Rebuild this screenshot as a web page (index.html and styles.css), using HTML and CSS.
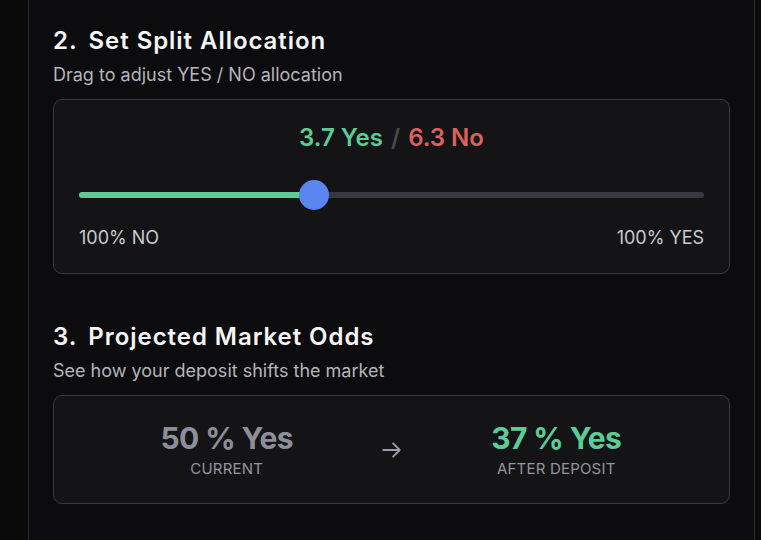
FILE: index.html
```html
<!DOCTYPE html>
<html lang="en">
<head>
  <meta charset="UTF-8" />
  <meta name="viewport" content="width=device-width, initial-scale=1.0"/>
  <title>Split Deposit</title>
  <link rel="stylesheet" href="styles.css">
</head>
<body>
  <div class="panel">
    <section class="step">
      <h2><span class="step-num">2.</span>Set Split Allocation</h2>
      <p class="step-hint">Drag to adjust YES / NO allocation</p>

      <div class="card split-card">
        <div class="split-values">
          <span class="yes">3.7 Yes</span>
          <span class="sep">/</span>
          <span class="no">6.3 No</span>
        </div>

        <div class="slider">
          <div class="slider-fill" style="width: 37.6%"></div>
          <div class="slider-thumb" style="left: 37.6%"></div>
        </div>

        <div class="slider-labels">
          <span>100% NO</span>
          <span>100% YES</span>
        </div>
      </div>
    </section>

    <section class="step">
      <h2><span class="step-num">3.</span>Projected Market Odds</h2>
      <p class="step-hint">See how your deposit shifts the market</p>

      <div class="card odds-card">
        <div class="odds">
          <div class="odds-value current">50 % Yes</div>
          <div class="odds-label">CURRENT</div>
        </div>
        <svg class="odds-arrow" width="22" height="22" viewBox="0 0 20 20" fill="none" stroke="currentColor" stroke-width="1.7" stroke-linecap="round" stroke-linejoin="round">
          <path d="M2 10h15M11 4l6 6-6 6"/>
        </svg>
        <div class="odds">
          <div class="odds-value after">37 % Yes</div>
          <div class="odds-label">AFTER DEPOSIT</div>
        </div>
      </div>
    </section>
  </div>
</body>
</html>
```

FILE: styles.css
```css
body {
  margin: 0;
  background: #0a0a0b;
  font-family: Inter, 'Noto Sans', sans-serif;
  color: #f2f2f4;
}

.panel {
  margin-left: 28px;
  width: 677px;
  min-height: 540px;
  padding: 0 24px;
  background: #0c0c0e;
  border-left: 1px solid #2e2e33;
  border-right: 1px solid #2e2e33;
}

.step {
  padding-top: 27px;
}

.step + .step {
  padding-top: 49px;
}

.step h2 {
  margin: 0;
  font-size: 24px;
  line-height: 28px;
  font-weight: 600;
  color: #f5f5f7;
  letter-spacing: 0.95px;
}

.step-num {
  margin-right: 11px;
}

.step-hint {
  margin: 9px 0 13px;
  font-size: 18px;
  line-height: 22px;
  color: #b4b4bb;
}

.card {
  background: #141417;
  border: 1px solid #38383e;
  border-radius: 9px;
}

/* split allocation */
.split-card {
  padding: 23px 25px 24px;
}

.split-values {
  text-align: center;
  font-size: 24px;
  line-height: 30px;
  font-weight: 600;
}

.split-values .yes {
  color: #5ccb96;
}

.split-values .sep {
  color: #4a4a51;
  margin: 0 2px;
}

.split-values .no {
  color: #da625c;
}

.slider {
  position: relative;
  height: 6px;
  margin: 39px 0 29px;
  background: #38383f;
  border-radius: 3px;
}

.slider-fill {
  height: 100%;
  background: #5ccb96;
  border-radius: 3px;
}

.slider-thumb {
  position: absolute;
  top: 50%;
  width: 30px;
  height: 30px;
  margin: -15px 0 0 -15px;
  background: #5b85f1;
  border-radius: 50%;
}

.slider-labels {
  display: flex;
  justify-content: space-between;
  font-size: 18px;
  line-height: 22px;
  color: #c9c9ce;
}

/* projected odds */
.odds-card {
  display: grid;
  grid-template-columns: 1fr auto 1fr;
  align-items: center;
  padding: 25px 19px 25px;
}

.odds {
  text-align: center;
}

.odds-value {
  font-size: 30px;
  line-height: 34px;
  font-weight: 700;
  letter-spacing: -0.6px;
}

.odds-value.current {
  color: #8e8e99;
}

.odds-value.after {
  color: #5ccb96;
}

.odds-label {
  margin-top: 5px;
  font-size: 15px;
  line-height: 18px;
  color: #95959d;
  letter-spacing: 0.2px;
}

.odds-arrow {
  color: #9c9ca4;
}
```
